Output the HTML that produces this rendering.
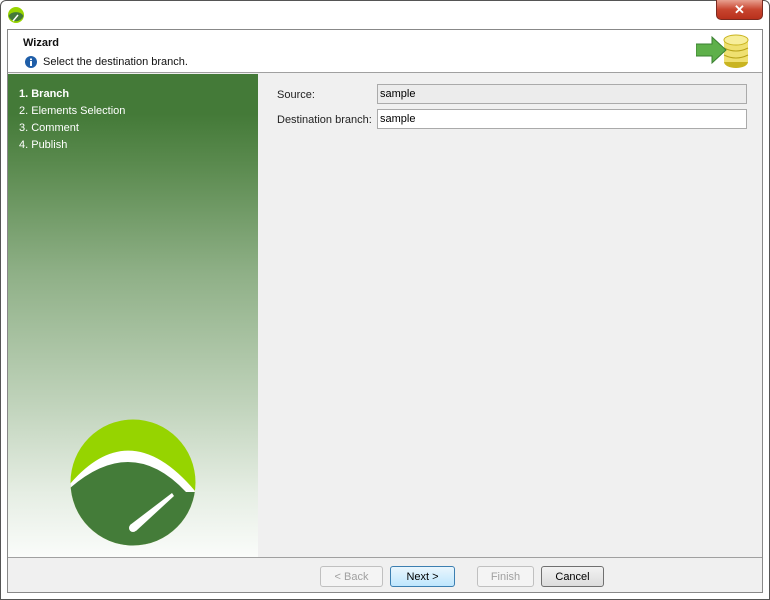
<!DOCTYPE html>
<html><head><meta charset="utf-8"><style>
*{margin:0;padding:0;box-sizing:border-box}
body{width:770px;height:600px;background:#fff;font-family:"Liberation Sans",sans-serif;font-size:11px;position:relative;overflow:hidden}
.frame{position:absolute;left:0;top:0;width:770px;height:600px;border:1px solid #555;border-radius:6px 6px 0 0;background:#fff}
.inner{position:absolute;left:7px;top:29px;width:756px;height:564px;border:1px solid #888;background:#f0f0f0}
.head{position:absolute;left:0;top:0;width:754px;height:43px;background:#fff;border-bottom:1px solid #a0a0a0}
.left{position:absolute;left:0;top:44px;width:250px;height:483px;background:linear-gradient(#447a38 0px,#447a38 40px,#5a8a4e 90px,#8fb087 200px,#c0d3bb 330px,#e6eee4 420px,#fafcfa 483px)}
.left div{color:#fff;position:absolute;left:11px;font-size:11px}
.bot{position:absolute;left:0;top:527px;width:754px;height:35px;border-top:1px solid #a0a0a0;background:#f0f0f0}
.btn{position:absolute;top:8px;height:21px;border:1px solid #707070;border-radius:3px;background:linear-gradient(#f2f2f2,#dcdcdc);text-align:center;line-height:20px;font-size:11px}
.dis{border-color:#c0c0c0;color:#a0a0a0;background:#f4f4f4}
.lbl{position:absolute;left:269px;color:#222}
.fld{position:absolute;left:369px;width:370px;height:20px;border:1px solid #aaa;padding-left:2px;line-height:18px}
</style></head><body>
<div class="frame"></div>
<svg style="position:absolute;left:7px;top:6px" width="18" height="18" viewBox="0 0 18 18"><circle cx="9" cy="9" r="8" fill="#97d400"/><path d="M1.5 10 A8 8 0 0 0 16.5 10 A8 6 0 0 0 1.5 10Z" fill="#447a38"/><path d="M6 15 L11 9" stroke="#fff" stroke-width="1.5"/></svg>
<div style="position:absolute;left:716px;top:0;width:47px;height:20px;border:1px solid #7a2a20;border-top:none;border-radius:0 0 5px 5px;background:linear-gradient(#e8a090,#c8452f 50%,#b8301c);color:#fff;font-weight:bold;text-align:center;font-size:13px;line-height:19px">✕</div>
<div class="inner">
<div class="head">
<div style="position:absolute;left:15px;top:7px;font-weight:bold;color:#111">Wizard</div>
<svg style="position:absolute;left:17px;top:26px" width="12" height="12"><circle cx="6" cy="6" r="6" fill="#1f5ea8"/><rect x="5" y="5" width="2" height="5" fill="#fff"/><rect x="5" y="2.5" width="2" height="1.6" fill="#fff"/></svg>
<div style="position:absolute;left:35px;top:26px;color:#111">Select the destination branch.</div>
<svg style="position:absolute;left:688px;top:4px" width="54" height="36" viewBox="0 0 54 36"><ellipse cx="40" cy="28" rx="12" ry="6" fill="#c9b420"/><rect x="28" y="6" width="24" height="22" fill="#efe070"/><ellipse cx="40" cy="6" rx="12" ry="5" fill="#f7ee9a" stroke="#c9b420"/><path d="M28 14 Q40 20 52 14 M28 21 Q40 27 52 21" stroke="#b8a218" fill="none"/><path d="M0 10 H16 V3 L30 16 L16 29 V22 H0Z" fill="#5eb04a" stroke="#3a8030"/></svg>
</div>
<div class="left">
<div style="top:14px;font-weight:bold">1. Branch</div>
<div style="top:31px">2. Elements Selection</div>
<div style="top:48px">3. Comment</div>
<div style="top:65px">4. Publish</div>
<svg style="position:absolute;left:62px;top:345px" width="126" height="127" viewBox="0 0 126 127"><defs><clipPath id="c"><ellipse cx="63" cy="63.5" rx="62.5" ry="63"/></clipPath></defs><g clip-path="url(#c)"><rect width="126" height="127" fill="#96d400"/><path d="M0 65 Q60 -5 125 72 L126 127 L0 127Z" fill="#fff"/><path d="M0 69 Q62 15 116 73 L126 73 L126 127 L0 127Z" fill="#447c39"/></g><path d="M60 106 L102 74 L104 77 L66 112Z" fill="#fff"/><circle cx="63" cy="109" r="4" fill="#fff"/></svg>
</div>
<div class="lbl" style="top:59px">Source:</div>
<div class="fld" style="top:54px;background:#ececec">sample</div>
<div class="lbl" style="top:84px">Destination branch:</div>
<div class="fld" style="top:79px;background:#fff">sample</div>
<div class="bot">
<div class="btn dis" style="left:312px;width:63px">&lt; Back</div>
<div class="btn" style="left:382px;width:65px;border-color:#3c7fb1;background:linear-gradient(#eaf6fd,#bee6fd)">Next &gt;</div>
<div class="btn dis" style="left:469px;width:57px">Finish</div>
<div class="btn" style="left:533px;width:63px">Cancel</div>
</div>
</div>
</body></html>
